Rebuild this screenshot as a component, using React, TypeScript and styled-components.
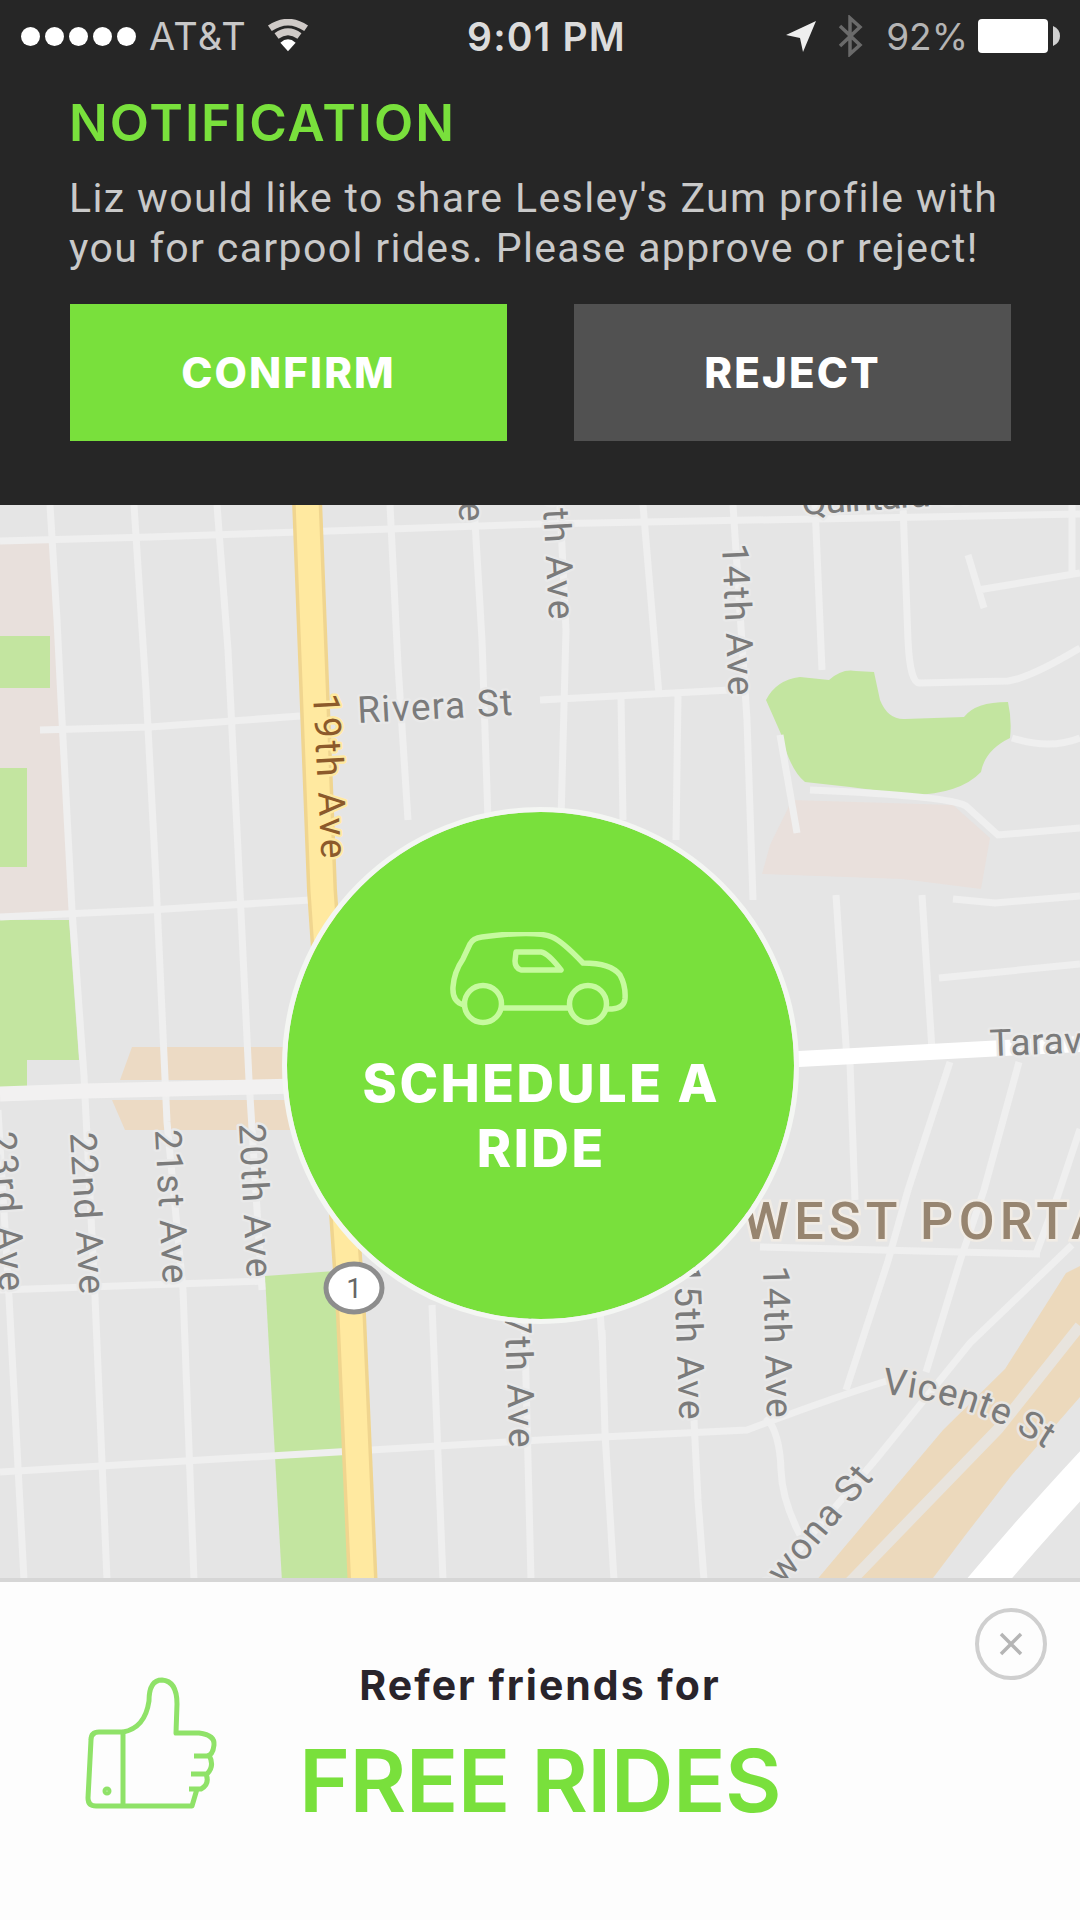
import React from 'react';
import styled, { createGlobalStyle } from 'styled-components';

const GREEN = '#79e03c';
const DARK = '#262626';

const Global = createGlobalStyle`
  * { box-sizing: border-box; }
  body { margin: 0; background: #fdfdfd; }
`;

const Screen = styled.div`
  width: 1080px;
  height: 1920px;
  display: flex;
  flex-direction: column;
  overflow: hidden;
  background: #fdfdfd;
  font-family: Inter, 'Liberation Sans', sans-serif;
`;

const Header = styled.header`
  height: 505px;
  flex: none;
  background: ${DARK};
`;

const StatusBar = styled.div`
  height: 72px;
  padding: 0 17px 0 21px;
  display: grid;
  grid-template-columns: 1fr auto 1fr;
  align-items: center;
  color: #d6d6d6;
`;

const StatusGroup = styled.div<{ $end?: boolean }>`
  display: flex;
  align-items: center;
  justify-content: ${(p) => (p.$end ? 'flex-end' : 'flex-start')};
`;

const Dots = styled.div`
  display: flex;
  gap: 5px;
`;

const Dot = styled.span`
  width: 19px;
  height: 19px;
  border-radius: 50%;
  background: #fff;
`;

const StatusText = styled.span<{ $size: number; $weight?: number; $gap?: number; $track?: number; $color?: string }>`
  font-size: ${(p) => p.$size}px;
  font-weight: ${(p) => p.$weight ?? 400};
  margin-left: ${(p) => p.$gap ?? 0}px;
  letter-spacing: ${(p) => p.$track ?? 0}px;
  color: ${(p) => p.$color ?? '#c8c8c8'};
  line-height: 1;
  white-space: nowrap;
`;

const Icon = styled.svg<{ $gap?: number }>`
  display: block;
  flex: none;
  margin-left: ${(p) => p.$gap ?? 0}px;
`;

const Notice = styled.section`
  padding: 19px 69px 0 69px;
`;

const NoticeTitle = styled.h1`
  margin: 0;
  font-size: 51px;
  line-height: 64px;
  font-weight: 600;
  letter-spacing: 2px;
  color: ${GREEN};
`;

const NoticeBody = styled.p`
  margin: 18px 0 0;
  font-family: Roboto, sans-serif;
  font-size: 41px;
  line-height: 50px;
  color: #c9c9c9;
  white-space: nowrap;
`;

const Line = styled.span<{ $track: number }>`
  display: block;
  letter-spacing: ${(p) => p.$track}px;
`;

const Actions = styled.div`
  display: grid;
  grid-template-columns: 437px 437px;
  justify-content: space-between;
  margin: 31px 0 0 1px;
`;

const ActionButton = styled.button<{ $bg: string; $track: number }>`
  height: 137px;
  padding: 0;
  border: 0;
  background: ${(p) => p.$bg};
  color: #fff;
  font: 800 42px Inter, sans-serif;
  letter-spacing: ${(p) => p.$track}px;
`;

const MapArea = styled.main`
  height: 1077px;
  flex: none;
  display: grid;
  place-items: center;
  background: #e5e5e5;
  overflow: hidden;
  border-bottom: 4px solid #d6d6d6;
  & > * { grid-area: 1 / 1; }
`;

const MapCanvas = styled.svg`
  display: block;
  align-self: start;
  text { font-family: Roboto, sans-serif; }
`;

const ScheduleButton = styled.button`
  z-index: 1;
  width: 517px;
  height: 517px;
  margin-top: 44px;
  padding: 120px 0 0;
  border: 5px solid #f4f6f3;
  border-radius: 50%;
  background: ${GREEN};
  background-clip: padding-box;
  display: flex;
  flex-direction: column;
  align-items: center;
  color: #fff;
  font: 800 52px/65px Inter, sans-serif;
`;

const ScheduleText = styled.span`
  margin-top: 23px;
  display: flex;
  flex-direction: column;
  align-items: center;
`;

const ScheduleLabel = styled.span<{ $track: number }>`
  letter-spacing: ${(p) => p.$track}px;
  padding-left: ${(p) => p.$track}px;
`;

const Footer = styled.footer`
  flex: 1;
  display: grid;
  grid-template-columns: 302px 476px 1fr;
  align-items: start;
`;

const ThumbCell = styled.div`
  padding: 94px 0 0 79px;
`;

const Promo = styled.div`
  display: flex;
  flex-direction: column;
  align-items: center;
  padding-top: 78px;
  white-space: nowrap;
`;

const PromoLead = styled.div`
  font-size: 41px;
  line-height: 50px;
  font-weight: 700;
  letter-spacing: 2px;
  color: #29242b;
`;

const PromoTitle = styled.div`
  margin-top: 19px;
  font-size: 87px;
  line-height: 104px;
  font-weight: 600;
  letter-spacing: -0.6px;
  color: ${GREEN};
`;

const CloseButton = styled.button`
  justify-self: end;
  width: 72px;
  height: 72px;
  margin: 26px 33px 0 0;
  padding: 0;
  display: grid;
  place-items: center;
  border: 4px solid #cfcfcf;
  border-radius: 50%;
  background: transparent;
`;

const minorRoads = [
  'M50 505L57 620L62 720L72 910L84 1076L95 1297L107 1580',
  'M134 505L146 690L156 880L167 1122L183 1290L194 1580',
  'M217 505L228 650L238 850L249 1080L262 1290',
  'M-2 1110L9 1297L24 1580',
  'M390 505L398 665L408 820M432 1305L443 1580',
  'M474 505L482 640L488 820M524 1300L531 1580',
  'M600 1310L602 1340',
  'M560 505L566 630L561 820M643 505L659 695M621 697L623 820M678 695L676 840',
  'M733 505L747 720L753 900M815 505L822 670',
  'M903 505L908 640Q910 684 920 683L1008 681Q1030 678 1080 648',
  'M968 555L984 608M978 590L1080 573M1072 505V575',
  'M1012 738Q1050 750 1080 738M780 735L797 833',
  'M810 790Q950 796 966 806L998 835L1080 828',
  'M836 895L847 1060M922 895L932 1050M953 899L995 903L1080 896M939 978L1080 964',
  'M0 541L150 537L360 530L540 524L1080 514',
  'M40 730L150 727L300 716M540 700L730 690',
  'M0 917L150 910L310 900',
  'M0 1290L265 1281M760 1247L1040 1254',
  'M0 1472L270 1456L540 1440L747 1430Q840 1395 890 1380',
  'M602 1330L605 1433L614 1580M694 1420L698 1500L704 1580M766 1417Q780 1433 781 1470Q782 1500 800 1535',
  'M850 1062L855 1200M950 1062L908 1190L888 1261L846 1390',
  'M1019 1062L984 1190L960 1261L926 1372M1080 1129L1058 1195L1036 1254',
  'M1072 1245L970 1343L877 1458L790 1560',
];

const streetLabels: { t: string; x: number; y: number; r: number; len: number; c?: string; end?: boolean }[] = [
  { t: 'Rivera St', x: 358, y: 723, r: -3, len: 155 },
  { t: '19th Ave', x: 313, y: 694, r: 87, len: 165, c: '#8c5a2b' },
  { t: '17th Ave', x: 454, y: 366, r: 88, len: 156 },
  { t: '16th Ave', x: 541, y: 464, r: 87, len: 156 },
  { t: '14th Ave', x: 722, y: 544, r: 87.5, len: 152 },
  { t: 'Quintara St', x: 802, y: 515, r: -4, len: 168 },
  { t: 'Taraval St', x: 990, y: 1056, r: -2, len: 168 },
  { t: '23rd Ave', x: -10, y: 1132, r: 86.5, len: 160 },
  { t: '22nd Ave', x: 70, y: 1133, r: 86.5, len: 162 },
  { t: '21st Ave', x: 155, y: 1130, r: 87, len: 154 },
  { t: '20th Ave', x: 239, y: 1124, r: 87, len: 154 },
  { t: '17th Ave', x: 504, y: 1292, r: 88, len: 156 },
  { t: '15th Ave', x: 674, y: 1264, r: 88, len: 156 },
  { t: '14th Ave', x: 763, y: 1266, r: 88.5, len: 152 },
  { t: 'Wawona St', x: 874, y: 1478, r: -50, len: 196, end: true },
];

const StreetMap = () => (
  <MapCanvas width="1080" height="1077" viewBox="0 505 1080 1077">
    <path d="M0 540H52L70 915H0Z" fill="#e8e0dc" />
    <g fill="#c3e5a0">
      <path d="M0 636H50V688H0ZM0 768H27V867H0Z" />
      <path d="M0 920H69L79 1060H27V1090H0Z" />
      <path d="M265 1276L335 1271L352 1582H282Z" />
      <path d="M766 700Q776 680 800 677L829 680Q842 668 856 671L874 672L880 700Q888 720 905 719L964 717Q975 702 1008 702Q1012 720 1010 738Q985 750 981 772Q960 794 912 795L850 787L805 782Q790 770 781 734Z" />
    </g>
    <path d="M792 800L953 805L990 838L981 889L902 879L762 874L770 845Z" fill="#e9e0dc" />
    <path d="M132 1047H285V1080H120ZM112 1100H290V1130H125Z" fill="#ecdac4" />
    <path d="M1080 1266L1066 1273L1005 1369L943 1430L815 1582H930L967 1533L1012 1475L1080 1397Z" fill="#ecd9bc" />
    <g fill="none" stroke="#efefef" strokeWidth="7">
      {minorRoads.map((d) => (
        <path key={d} d={d} />
      ))}
    </g>
    <path d="M850 1582L998 1429L1080 1326" fill="none" stroke="#e8e4de" strokeWidth="11" />
    <path d="M0 1094L85 1091L300 1086" fill="none" stroke="#f2f1f1" strokeWidth="15" />
    <path d="M780 1060L1080 1044" fill="none" stroke="#fff" strokeWidth="16" />
    <path d="M978 1592Q1030 1530 1095 1460" fill="none" stroke="#fff" strokeWidth="34" />
    <path d="M307 500L322 890L351 1315L363 1590" fill="none" stroke="#f0d58f" strokeWidth="30" />
    <path d="M307 500L322 890L351 1315L363 1590" fill="none" stroke="#ffe9a0" strokeWidth="23" />

    <g fontSize="37" strokeWidth="5" paintOrder="stroke" strokeLinejoin="round">
      {streetLabels.map((l) => (
        <text
          key={`${l.t}-${l.x}`}
          transform={`translate(${l.x} ${l.y}) rotate(${l.r})`}
          textLength={l.len}
          textAnchor={l.end ? 'end' : 'start'}
          stroke={l.c ? '#ffe9a0' : '#e9e9e9'}
          fill={l.c ?? '#7b7b7b'}
        >
          {l.t}
        </text>
      ))}
      <path id="vicente" d="M882 1394Q975 1402 1047 1450" fill="none" stroke="none" />
      <text fill="#7b7b7b" stroke="#e9e6e2">
        <textPath href="#vicente" textLength="174">Vicente St</textPath>
      </text>
    </g>
    <text x="743" y="1239" fontSize="52" fontWeight="500" letterSpacing="5.4" fill="#978570" stroke="#f1ece5" strokeWidth="5" paintOrder="stroke">
      WEST PORTAL
    </text>

    <ellipse cx="354" cy="1288" rx="28" ry="24" fill="#fff" stroke="#8d8d8d" strokeWidth="5" />
    <text x="354" y="1298" fontSize="28" textAnchor="middle" fill="#666">1</text>
  </MapCanvas>
);

const WifiIcon = () => (
  <Icon $gap={20} width="42" height="34" viewBox="0 0 44 34" fill="none" stroke="#cfcac7">
    <path d="M3 9Q22 -4 41 9" strokeWidth="7" />
    <path d="M10 17Q22 8 34 17" strokeWidth="7" />
    <path d="M22 33L14 24Q22 17 30 24Z" fill="#fff" stroke="none" />
  </Icon>
);

const LocationIcon = () => (
  <Icon width="31" height="31" viewBox="0 0 31 31">
    <path d="M30 0L17 31L14 17L0 14Z" fill="#eee" />
  </Icon>
);

const BluetoothIcon = () => (
  <Icon $gap={21} width="25" height="42" viewBox="0 0 25 42" fill="none" stroke="#6a6a6a" strokeWidth="3.5">
    <path d="M2 11L22 30L12 39V3L22 12L2 31" />
  </Icon>
);

const BatteryIcon = () => (
  <Icon $gap={9} width="86" height="36" viewBox="0 0 86 36">
    <rect x="1" y="1" width="70" height="34" rx="4" fill="#fff" />
    <path d="M76 8Q83 11 83 18T76 28Z" fill="#d0d0d0" />
  </Icon>
);

const CarIcon = () => (
  <Icon width="180" height="96" viewBox="0 0 180 96" fill="none" stroke="#c6fa9f" strokeWidth="5.5">
    <path d="M14 73Q2 70 3 55Q4 40 13 27L20 12Q23 6 32 5Q85 -2 102 5Q112 9 133 31Q161 31 170 43Q176 54 175 67Q174 76 162 77H157" />
    <path d="M52 76H119" />
    <circle cx="33" cy="72" r="18.5" />
    <circle cx="138" cy="72" r="18.5" />
    <path d="M66 20H91Q98 21 111 38H71Q65 36 65 29Z" strokeLinejoin="round" />
  </Icon>
);

const ThumbIcon = () => (
  <Icon width="142" height="138" viewBox="0 0 142 138" fill="none" stroke="#8fe268" strokeWidth="5" strokeLinejoin="round">
    <path d="M44 56H20Q12 56 12 64L9 122Q9 130 17 130H44" />
    <path d="M44 56V131" />
    <path d="M44 56Q66 52 70 25Q70 4 83 4Q98 5 98 28L97 57H120Q136 59 135 69Q134 79 128 80H115" />
    <path d="M130 79Q136 90 128 98H112M127 98Q131 108 122 113H110M118 113L113 130H44" />
    <circle cx="28" cy="115" r="2" />
  </Icon>
);

export default function App() {
  return (
    <>
      <Global />
      <Screen>
        <Header>
          <StatusBar>
            <StatusGroup>
              <Dots>
                {[0, 1, 2, 3, 4].map((i) => (
                  <Dot key={i} />
                ))}
              </Dots>
              <StatusText $size={38} $gap={13} $track={1.2}>AT&amp;T</StatusText>
              <WifiIcon />
            </StatusGroup>
            <StatusText $size={39} $weight={600} $gap={9} $track={1.2} $color="#dcdcdc">9:01 PM</StatusText>
            <StatusGroup $end>
              <LocationIcon />
              <BluetoothIcon />
              <StatusText $size={37} $gap={23} $color="#b4b4b4">92%</StatusText>
              <BatteryIcon />
            </StatusGroup>
          </StatusBar>
          <Notice>
            <NoticeTitle>NOTIFICATION</NoticeTitle>
            <NoticeBody>
              <Line $track={1.38}>Liz would like to share Lesley's Zum profile with</Line>
              <Line $track={1.36}>you for carpool rides. Please approve or reject!</Line>
            </NoticeBody>
            <Actions>
              <ActionButton $bg={GREEN} $track={2.1}>CONFIRM</ActionButton>
              <ActionButton $bg="#515151" $track={2.2}>REJECT</ActionButton>
            </Actions>
          </Notice>
        </Header>
        <MapArea>
          <StreetMap />
          <ScheduleButton>
            <CarIcon />
            <ScheduleText>
              <ScheduleLabel $track={2.6}>SCHEDULE A</ScheduleLabel>
              <ScheduleLabel $track={2.6}>RIDE</ScheduleLabel>
            </ScheduleText>
          </ScheduleButton>
        </MapArea>
        <Footer>
          <ThumbCell>
            <ThumbIcon />
          </ThumbCell>
          <Promo>
            <PromoLead>Refer friends for</PromoLead>
            <PromoTitle>FREE RIDES</PromoTitle>
          </Promo>
          <CloseButton aria-label="Close">
            <Icon width="24" height="24" viewBox="0 0 24 24" stroke="#b5b5b5" strokeWidth="3.5">
              <path d="M2 2L22 22M22 2L2 22" />
            </Icon>
          </CloseButton>
        </Footer>
      </Screen>
    </>
  );
}
